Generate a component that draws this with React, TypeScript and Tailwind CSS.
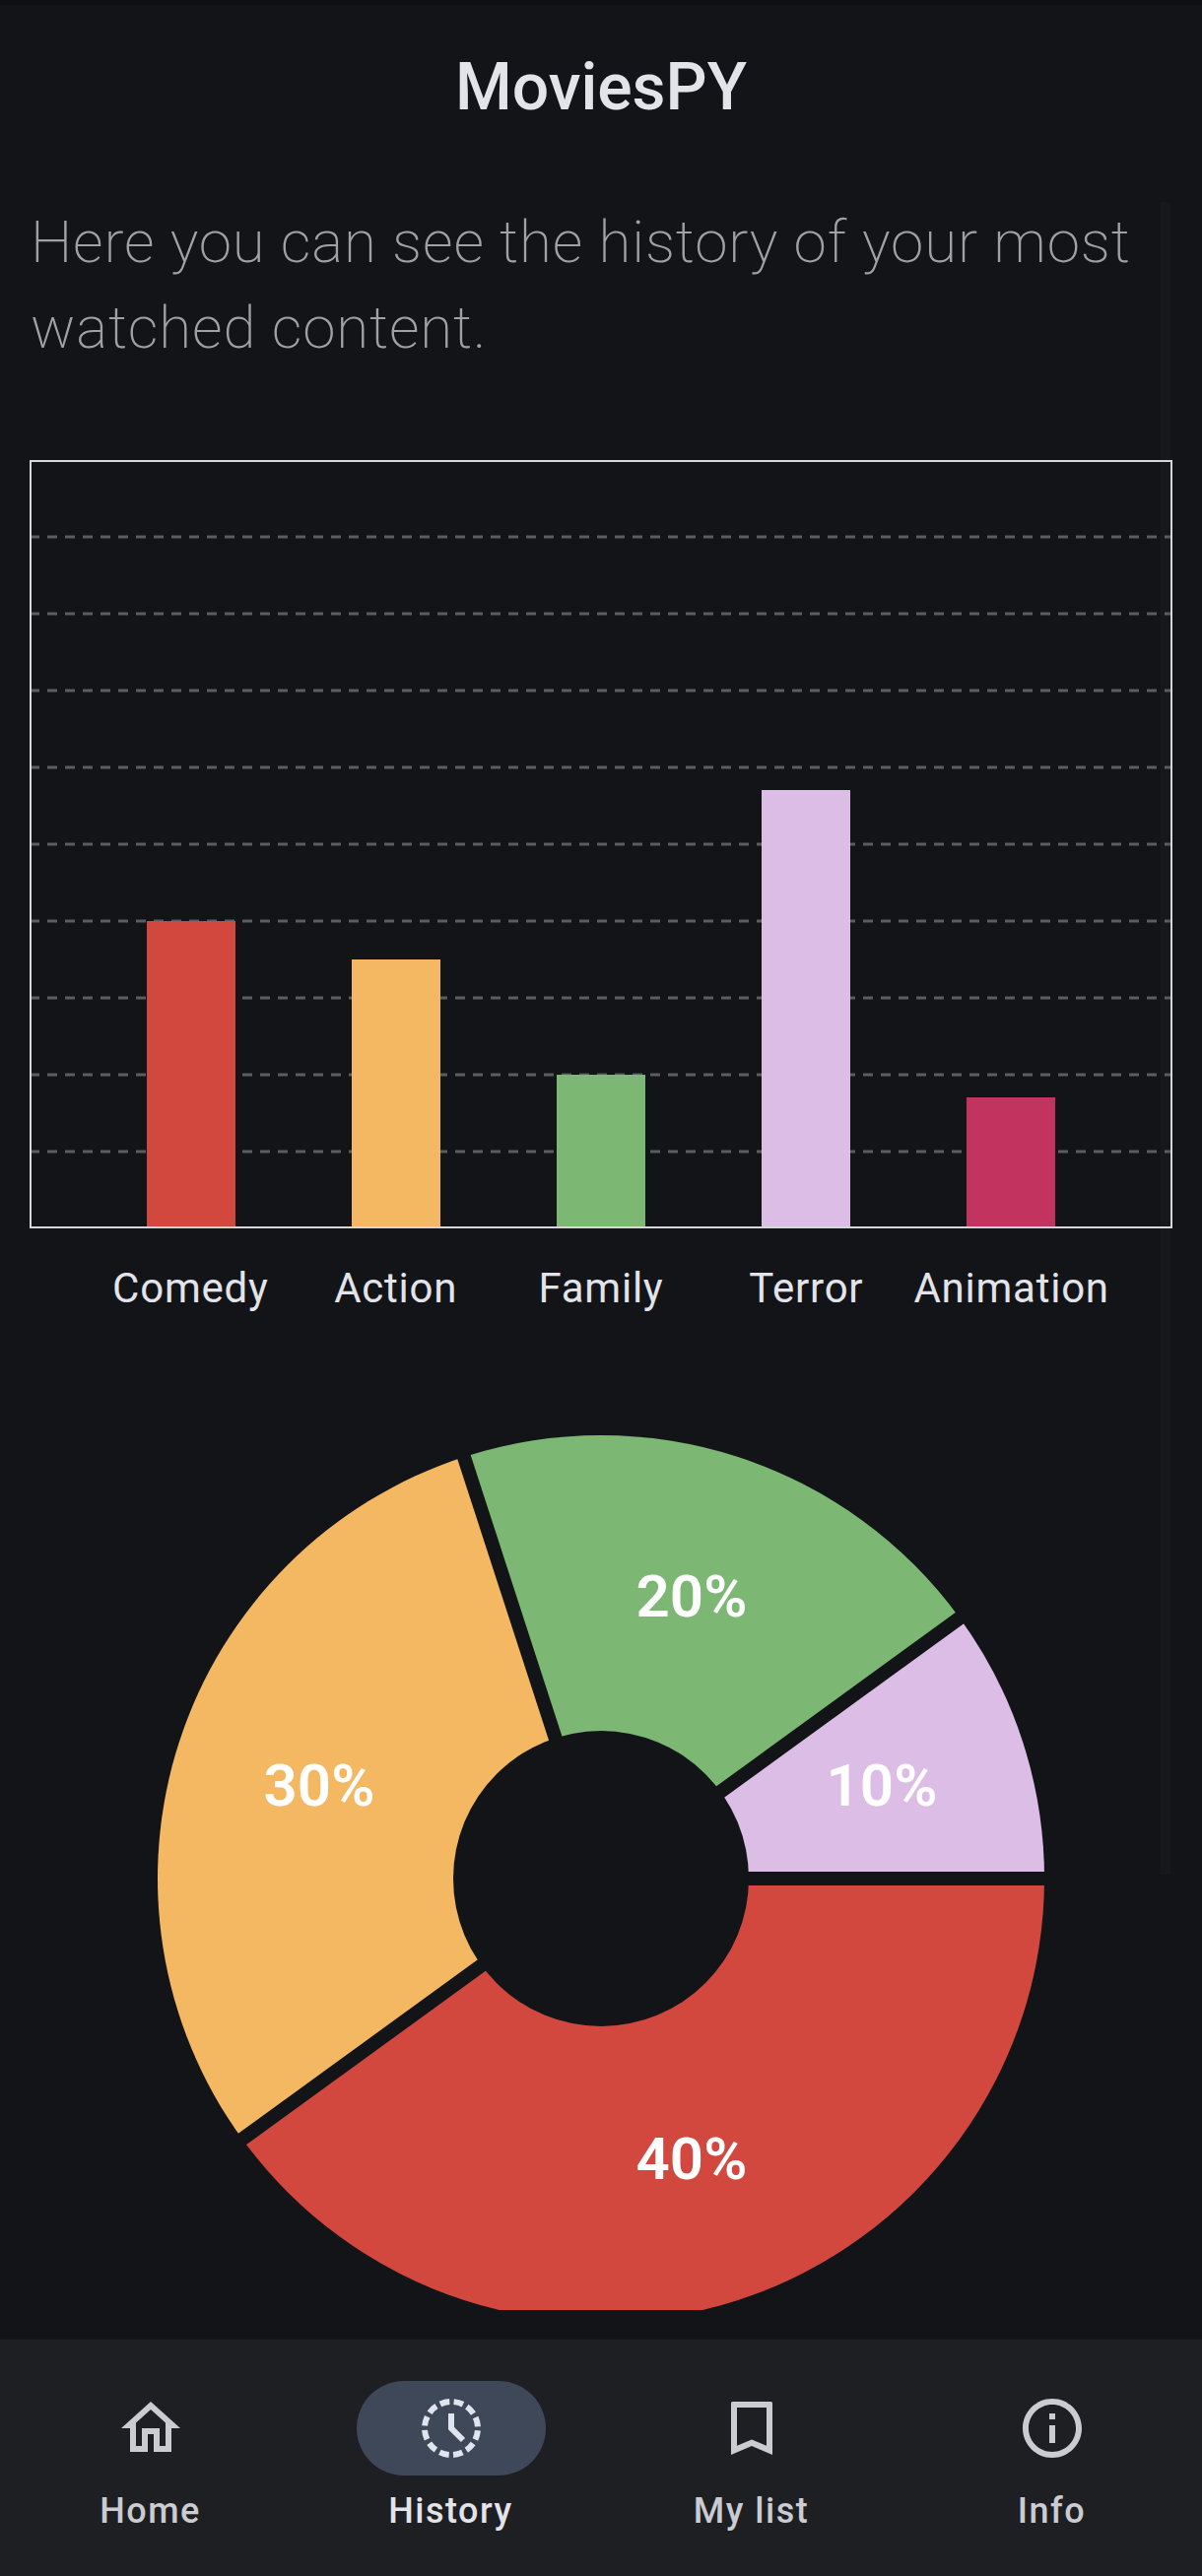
const BG = '#131418';

const bars = [
  { x: 119, top: 468, color: '#d2483e' },
  { x: 327, top: 507, color: '#f4b862' },
  { x: 535, top: 624, color: '#7cb873' },
  { x: 743, top: 335, color: '#dcbde5' },
  { x: 951, top: 647, color: '#c33360' },
];

const genres = ['Comedy', 'Action', 'Family', 'Terror', 'Animation'];

const gridLines = [78, 156, 234, 312, 390, 468, 546, 624, 702];

const BarChart = () => (
  <svg width="1160" height="780" viewBox="0 0 1160 780" className="relative z-10 block">
    {gridLines.map((y) => (
      <line key={y} x1="0" x2="1160" y1={y} y2={y} stroke="#5c5d60" strokeWidth="3" strokeDasharray="10 8" />
    ))}
    {bars.map((b) => (
      <rect key={b.x} x={b.x} y={b.top} width="90" height={779 - b.top} fill={b.color} />
    ))}
    <rect x="1" y="1" width="1158" height="778" fill="none" stroke="#d5d6da" strokeWidth="2" />
  </svg>
);

// points on the pie, angles clockwise from 3 o'clock
const CX = 460;
const CY = 452;
const R = 450;
const point = (deg: number, r: number) => {
  const a = (deg * Math.PI) / 180;
  return `${(CX + r * Math.cos(a)).toFixed(2)} ${(CY + r * Math.sin(a)).toFixed(2)}`;
};
const slice = (from: number, to: number) =>
  `M${CX} ${CY} L${point(from, R)} A${R} ${R} 0 ${to - from > 180 ? 1 : 0} 1 ${point(to, R)} Z`;

const slices = [
  { from: 0, to: 144, color: '#d2483e' },
  { from: 144, to: 252, color: '#f4b862' },
  { from: 252, to: 324, color: '#7cb873' },
  { from: 324, to: 360, color: '#dcbde5' },
];

const pieLabels = [
  { text: '40%', x: 552, y: 757 },
  { text: '30%', x: 174, y: 378 },
  { text: '20%', x: 552, y: 186 },
  { text: '10%', x: 745, y: 378 },
];

const PieChart = () => (
  <svg width="920" height="890" viewBox="0 0 920 890" className="mx-auto block">
    {slices.map((s) => (
      <path key={s.from} d={slice(s.from, s.to)} fill={s.color} />
    ))}
    {[0, 144, 252, 324].map((deg) => (
      <line key={deg} x1={CX} y1={CY} x2={CX + 470 * Math.cos((deg * Math.PI) / 180)} y2={CY + 470 * Math.sin((deg * Math.PI) / 180)} stroke={BG} strokeWidth="14" />
    ))}
    <circle cx={CX} cy={CY} r="150" fill={BG} />
    {pieLabels.map((l) => (
      <text key={l.text} x={l.x} y={l.y} textAnchor="middle" fill="#ffffff" fontSize="60" fontWeight="600" fontFamily="Roboto, sans-serif">
        {l.text}
      </text>
    ))}
  </svg>
);

const HomeIcon = () => (
  <svg viewBox="0 0 24 24" className="h-[72px] w-[72px] fill-[#cbccd1]">
    <path d="M12 5.69l5 4.5V18h-2v-6H9v6H7v-7.81l5-4.5M12 3L2 12h3v8h6v-6h2v6h6v-8h3L12 3z" />
  </svg>
);

const ClockIcon = () => (
  <svg viewBox="0 0 24 24" className="h-[72px] w-[72px] fill-none stroke-[#dfe4ee]">
    <circle cx="12" cy="12" r="9" strokeWidth="2" strokeDasharray="3.2 1.512" strokeDashoffset="-0.756" />
    <path d="M12 7v5l4 4" strokeWidth="2" />
  </svg>
);

const BookmarkIcon = () => (
  <svg viewBox="0 0 24 24" className="h-[72px] w-[72px] fill-[#cbccd1]">
    <path d="M5.5 3h13q.5 0 .5.5V21l-7-3-7 3V3.5q0-.5.5-.5Zm1.5 2v12.95l5-2.15 5 2.15V5H7Z" />
  </svg>
);

const InfoIcon = () => (
  <svg viewBox="0 0 24 24" className="h-[72px] w-[72px] fill-[#cbccd1]">
    <path d="M11 7h2v2h-2zm0 4h2v6h-2zm1-9C6.48 2 2 6.48 2 12s4.48 10 10 10 10-4.48 10-10S17.52 2 12 2zm0 18c-4.41 0-8-3.59-8-8s3.59-8 8-8 8 3.59 8 8-3.59 8-8 8z" />
  </svg>
);

const navItems = [
  { label: 'Home', icon: <HomeIcon /> },
  { label: 'History', icon: <ClockIcon />, active: true },
  { label: 'My list', icon: <BookmarkIcon /> },
  { label: 'Info', icon: <InfoIcon /> },
];

const App = () => {
  return (
    <div className="relative flex h-[2615px] w-[1220px] flex-col overflow-hidden bg-[#131418] font-['Roboto',sans-serif]">
      {/* status bar shadow */}
      <div className="h-[5px] shrink-0 bg-[#0e0f12]" />

      <main className="relative flex-1 overflow-hidden">
        {/* faint scrollbar */}
        <div className="absolute top-[200px] right-[32px] h-[1698px] w-[10px] bg-[#17181c]" />

        <h1 className="flex h-[166px] items-center justify-center text-[66px] font-medium text-[#e3e4e9]">MoviesPY</h1>

        <p className="relative mt-[31px] pl-[31px] text-[60px] leading-[87px] font-extralight tracking-[0.85px] text-[#a0a1a5]">
          Here you can see the history of your most watched content.
        </p>

        <div className="mx-[30px] mt-[91px]">
          <BarChart />
          <div className="relative flex h-[120px] items-center justify-evenly">
            {genres.map((g) => (
              <span key={g} className="flex w-[90px] justify-center text-[42px] tracking-[0.75px] whitespace-nowrap text-[#e3e4e9]">
                {g}
              </span>
            ))}
          </div>
        </div>

        <div className="relative mt-[88px]">
          <PieChart />
        </div>
      </main>

      {/* bottom navigation */}
      <nav className="grid h-[240px] shrink-0 grid-cols-4 bg-[#1e1f23]">
        {navItems.map((item) => (
          <div key={item.label} className="flex flex-col items-center pt-[42px]">
            <div className={`flex h-[96px] w-[192px] items-center justify-center rounded-full ${item.active ? 'bg-[#3e4859]' : ''}`}>
              {item.icon}
            </div>
            <span className={`mt-[12px] text-[36px] leading-[48px] font-medium tracking-[1.5px] ${item.active ? 'text-[#e3e4e9]' : 'text-[#cbccd1]'}`}>
              {item.label}
            </span>
          </div>
        ))}
      </nav>
    </div>
  );
};

export default App;
